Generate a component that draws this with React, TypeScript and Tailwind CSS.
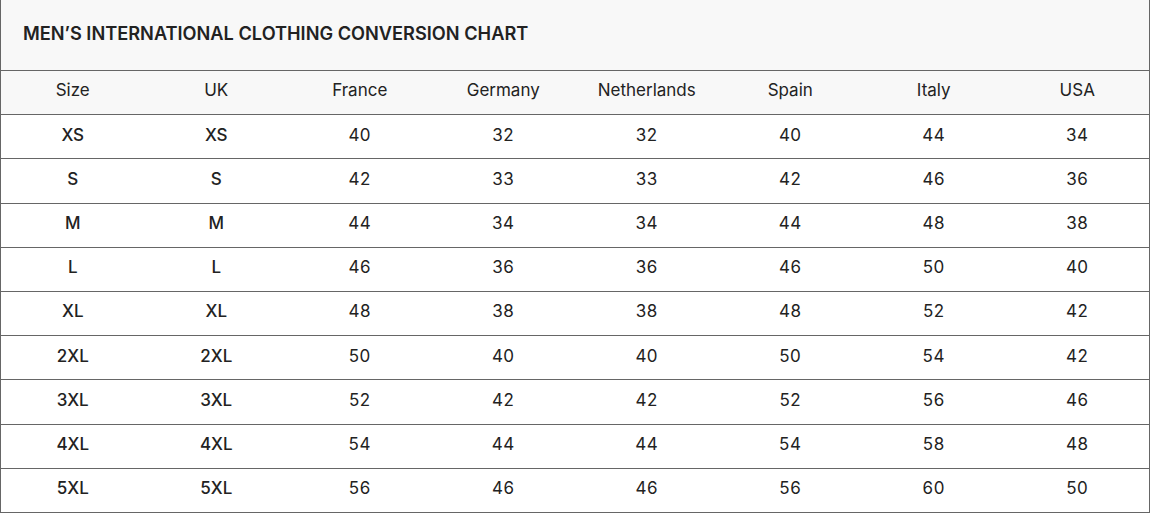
const headers = ["Size", "UK", "France", "Germany", "Netherlands", "Spain", "Italy", "USA"];

const rows = [
  ["XS", "XS", "40", "32", "32", "40", "44", "34"],
  ["S", "S", "42", "33", "33", "42", "46", "36"],
  ["M", "M", "44", "34", "34", "44", "48", "38"],
  ["L", "L", "46", "36", "36", "46", "50", "40"],
  ["XL", "XL", "48", "38", "38", "48", "52", "42"],
  ["2XL", "2XL", "50", "40", "40", "50", "54", "42"],
  ["3XL", "3XL", "52", "42", "42", "52", "56", "46"],
  ["4XL", "4XL", "54", "44", "44", "54", "58", "48"],
  ["5XL", "5XL", "56", "46", "46", "56", "60", "50"],
];

export default function App() {
  return (
    <div className="w-[1150px] h-[514px] bg-white font-['Inter',sans-serif] text-[#222]">
      <div className="flex flex-col h-[513px] border-l border-r border-b border-[#666]">
        <div className="h-[70px] shrink-0 bg-[#f8f8f8] flex items-center pl-[22px] pb-[3px]">
          <h1 className="text-[18.2px] font-semibold">MEN’S INTERNATIONAL CLOTHING CONVERSION CHART</h1>
        </div>
        <div className="flex-1 grid grid-cols-8 items-center border-t border-[#666] bg-[#f8f8f8] text-[17px] pb-[3px]">
          {headers.map((h) => (
            <div key={h} className="text-center">{h}</div>
          ))}
        </div>
        {rows.map((r, i) => (
          <div key={i} className="flex-1 grid grid-cols-8 items-center border-t border-[#666] text-[17px] pb-[3px]">
            {r.map((c, j) => (
              <div key={j} className={j < 2 ? "text-center font-medium" : "text-center tracking-[0.5px]"}>{c}</div>
            ))}
          </div>
        ))}
      </div>
    </div>
  );
}
